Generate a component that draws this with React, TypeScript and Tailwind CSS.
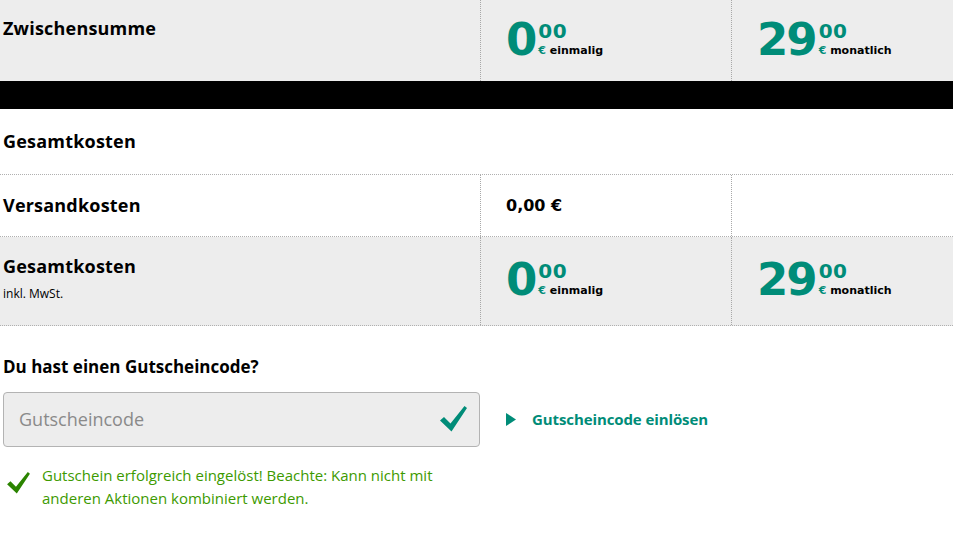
import React from "react";

function Price({ big, label }: { big: string; label: string }) {
  return (
    <div className="flex items-start" style={{ fontFamily: "'DejaVu Sans', sans-serif" }}>
      <span className="text-[45px] font-bold leading-[36px] text-[#008c78] tracking-[-2px]">{big}</span>
      <div className="ml-[3px] flex flex-col">
        <span className="text-[20px] font-bold leading-[18px] text-[#008c78] tracking-[0.5px]">00</span>
        <span className="mt-[4px] text-[11px] font-bold leading-[14px] text-black whitespace-nowrap">
          <span className="text-[#008c78]">€</span> {label}
        </span>
      </div>
    </div>
  );
}

function Check({ color, className }: { color: string; className?: string }) {
  return (
    <svg className={className} width="27" height="26" viewBox="0 0 27 26">
      <path d="M0 14.5 L4 11 L10.5 17.5 L24.5 0 L27 2 L11.5 25.5 Z" fill={color} />
    </svg>
  );
}

export default function App() {
  const font = { fontFamily: "'Open Sans', 'Liberation Sans', sans-serif" };
  return (
    <div className="w-[953px] h-[535px] overflow-hidden bg-white text-black" style={font}>
      {/* Zwischensumme */}
      <div className="grid grid-cols-[480px_251px_1fr] h-[81px] bg-[#ededed]">
        <div className="pl-[3px] pt-[16px] text-[18px] font-bold leading-[24px] tracking-[0.2px]">Zwischensumme</div>
        <div className="border-l border-dotted border-[#a8a8a8] pl-[25px] pt-[22px]">
          <Price big="0" label="einmalig" />
        </div>
        <div className="border-l border-dotted border-[#a8a8a8] pl-[25px] pt-[22px]">
          <Price big="29" label="monatlich" />
        </div>
      </div>
      <div className="h-[28px] bg-black" />
      {/* Gesamtkosten header */}
      <div className="h-[66px] flex items-center pl-[3px] border-b border-dotted border-[#b0b0b0] text-[18px] font-bold tracking-[0.2px]">
        Gesamtkosten
      </div>
      {/* Versandkosten */}
      <div className="grid grid-cols-[480px_251px_1fr] h-[62px] border-b border-dotted border-[#b0b0b0]">
        <div className="pl-[3px] flex items-center text-[18px] font-bold tracking-[0.2px]">Versandkosten</div>
        <div
          className="border-l border-dotted border-[#a8a8a8] pl-[25px] flex items-center text-[16px] font-bold"
          style={{ fontFamily: "'DejaVu Sans', sans-serif" }}
        >
          0,00 €
        </div>
        <div className="border-l border-dotted border-[#a8a8a8]" />
      </div>
      {/* Gesamtkosten gray */}
      <div className="grid grid-cols-[480px_251px_1fr] h-[89px] bg-[#ededed] border-b border-dotted border-[#b0b0b0]">
        <div className="pl-[3px] pt-[17px]">
          <div className="text-[18px] font-bold leading-[24px] tracking-[0.2px]">Gesamtkosten</div>
          <div className="mt-[8px] text-[12px] leading-[16px]">inkl. MwSt.</div>
        </div>
        <div className="border-l border-dotted border-[#a8a8a8] pl-[25px] pt-[25px]">
          <Price big="0" label="einmalig" />
        </div>
        <div className="border-l border-dotted border-[#a8a8a8] pl-[25px] pt-[25px]">
          <Price big="29" label="monatlich" />
        </div>
      </div>
      {/* Coupon */}
      <div className="pl-[3px] pt-[29px] text-[17px] font-bold leading-[24px]">Du hast einen Gutscheincode?</div>
      <div className="mt-[13px] flex items-center">
        <div className="ml-[3px] w-[477px] h-[55px] rounded-[4px] border border-[#b3b3b3] bg-[#ededed] flex items-center justify-between pl-[15px] pr-[12px]">
          <span className="text-[18px] text-[#8a8a8a]">Gutscheincode</span>
          <Check color="#008c78" className="mb-[2px]" />
        </div>
        <div className="ml-[26px] flex items-center">
          <svg width="10" height="13" viewBox="0 0 10 13">
            <path d="M0 0 L10 6.5 L0 13 Z" fill="#008c78" />
          </svg>
          <span className="ml-[16px] text-[15px] font-bold text-[#008c78] tracking-[-0.1px]">Gutscheincode einlösen</span>
        </div>
      </div>
      <div className="mt-[17px] flex items-start">
        <Check color="#2b8400" className="ml-[6px] mt-[8px] w-[25px] h-[22px]" />
        <div className="ml-[11px] text-[15px] leading-[23px] text-[#3d9a00]">
          Gutschein erfolgreich eingelöst! Beachte: Kann nicht mit
          <br />
          anderen Aktionen kombiniert werden.
        </div>
      </div>
    </div>
  );
}
